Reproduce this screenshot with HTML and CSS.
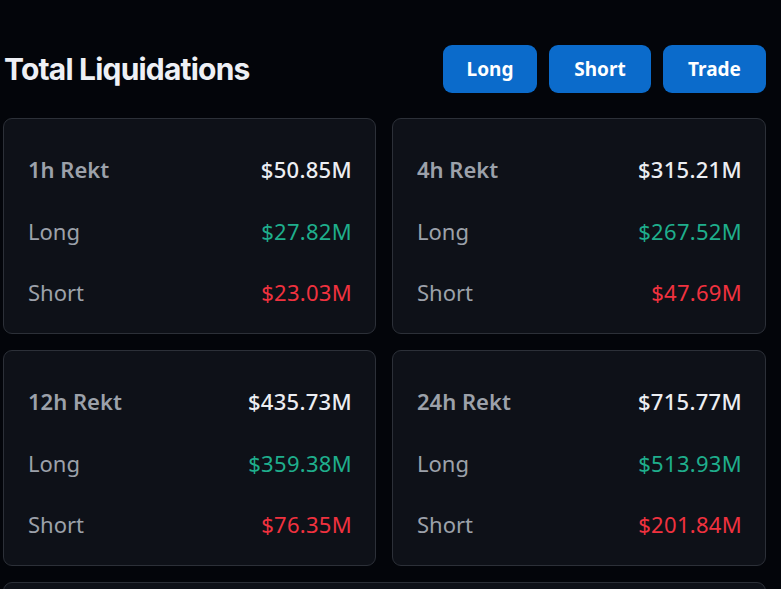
FILE: index.html
```html
<!DOCTYPE html>
<html lang="en">
<head>
<meta charset="utf-8">
<title>Total Liquidations</title>
<link rel="stylesheet" href="styles.css">
</head>
<body>
<div class="page">
  <div class="header">
    <h1 class="title">Total Liquidations</h1>
    <div class="actions">
      <button class="btn btn-long">Long</button>
      <button class="btn btn-short">Short</button>
      <button class="btn btn-trade">Trade</button>
    </div>
  </div>
  <div class="grid">
    <div class="card">
      <div class="row head"><span class="label">1h Rekt</span><span class="value total">$50.85M</span></div>
      <div class="row"><span class="label">Long</span><span class="value up">$27.82M</span></div>
      <div class="row"><span class="label">Short</span><span class="value down">$23.03M</span></div>
    </div>
    <div class="card">
      <div class="row head"><span class="label">4h Rekt</span><span class="value total">$315.21M</span></div>
      <div class="row"><span class="label">Long</span><span class="value up">$267.52M</span></div>
      <div class="row"><span class="label">Short</span><span class="value down">$47.69M</span></div>
    </div>
    <div class="card">
      <div class="row head"><span class="label">12h Rekt</span><span class="value total">$435.73M</span></div>
      <div class="row"><span class="label">Long</span><span class="value up">$359.38M</span></div>
      <div class="row"><span class="label">Short</span><span class="value down">$76.35M</span></div>
    </div>
    <div class="card">
      <div class="row head"><span class="label">24h Rekt</span><span class="value total">$715.77M</span></div>
      <div class="row"><span class="label">Long</span><span class="value up">$513.93M</span></div>
      <div class="row"><span class="label">Short</span><span class="value down">$201.84M</span></div>
    </div>
    <div class="card card-wide"></div>
  </div>
</div>
</body>
</html>
```

FILE: styles.css
```css
* { box-sizing: border-box; }
html, body {
  margin: 0;
  padding: 0;
  background: #03050a;
  height: 100%;
  overflow: hidden;
}
body {
  font-family: "Noto Sans", "Liberation Sans", sans-serif;
  color: #e6e8ec;
}
.page {
  width: 763px;
  height: 589px;
  overflow: hidden;
  margin-left: 3px;
  padding-top: 45px;
}
.header {
  display: flex;
  align-items: center;
  justify-content: space-between;
  height: 48px;
}
.title {
  margin: 0 0 0 1px;
  font-family: Inter, "Liberation Sans", sans-serif;
  font-weight: 700;
  font-size: 30px;
  letter-spacing: -0.8px;
  color: #eef0f5;
}
.actions {
  display: flex;
  gap: 12px;
}
.btn {
  height: 48px;
  border: 0;
  border-radius: 9px;
  background: #0b6bcb;
  color: #ffffff;
  font-family: "Noto Sans", "Liberation Sans", sans-serif;
  font-weight: 700;
  font-size: 19px;
  padding: 0;
}
.btn-long { width: 94px; }
.btn-short { width: 102px; }
.btn-trade { width: 103px; }
.grid {
  margin-top: 25px;
  display: grid;
  grid-template-columns: 373px 374px;
  column-gap: 16px;
  row-gap: 16px;
}
.card {
  height: 216px;
  background: #0e1118;
  border: 1px solid #2c3038;
  border-radius: 9px;
  padding: 30px 23px 0 24px;
}
.card-wide {
  grid-column: 1 / 3;
}
.row {
  display: flex;
  justify-content: space-between;
  align-items: center;
  height: 40px;
  margin-bottom: 21.5px;
  font-size: 22px;
}
.label { color: #9ca1aa; }
.head .label { font-weight: 600; }
.value { letter-spacing: 0.3px; }
.value.total { color: #eceef2; font-weight: 500; }
.value.up { color: #1fae8c; }
.value.down { color: #f0323f; }
```
